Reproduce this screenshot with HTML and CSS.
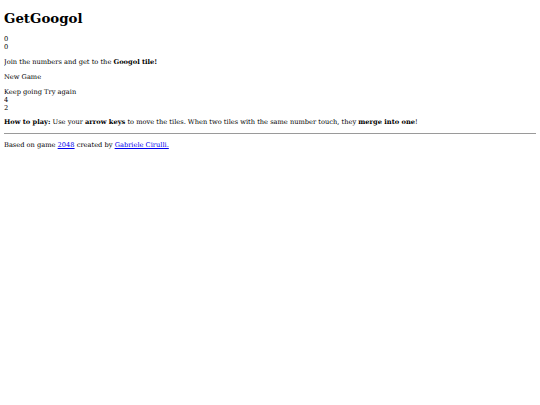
FILE: index.html
```html
<!DOCTYPE html>
<html>
<head>
<meta charset="utf-8">
<title>GetGoogol</title>
<link rel="stylesheet" href="styles.css">
</head>
<body class="page">
<h1 class="title">GetGoogol</h1>
<div class="score">0</div>
<div class="score">0</div>
<p class="intro">Join the numbers and get to the <strong>Googol tile!</strong></p>
<p class="new-game">New Game</p>
<div class="message">
<div class="lower">Keep going Try again</div>
</div>
<div class="tile">4</div>
<div class="tile">2</div>
<p class="explain"><strong>How to play:</strong> Use your <strong>arrow keys</strong> to move the tiles. When two tiles with the same number touch, they <strong>merge into one</strong>!</p>
<hr class="rule">
<p class="credit">Based on game <a class="link" href="#">2048</a> created by <a class="link" href="#">Gabriele Cirulli.</a></p>
</body>
</html>
```
FILE: styles.css
```css
html { background: #fff; }
.page {
  margin: 4px;
  font-family: "DejaVu Serif", serif;
  font-size: 6.67px;
  color: #000;
}
.title {
  font-size: 13.33px;
  font-weight: bold;
  margin: 5.9px 0 8.93px;
}
.intro {
  margin: 7.5px 0 6.67px;
}
.new-game, .explain, .credit {
  margin: 6.67px 0;
}
.message { margin-top: 6.67px; }
.rule {
  margin: 4px -4px 4px 0;
  border: 0;
  border-top: 1px solid #9a9a9a;
  height: 0;
}
.link { color: #0000ee; }
```
